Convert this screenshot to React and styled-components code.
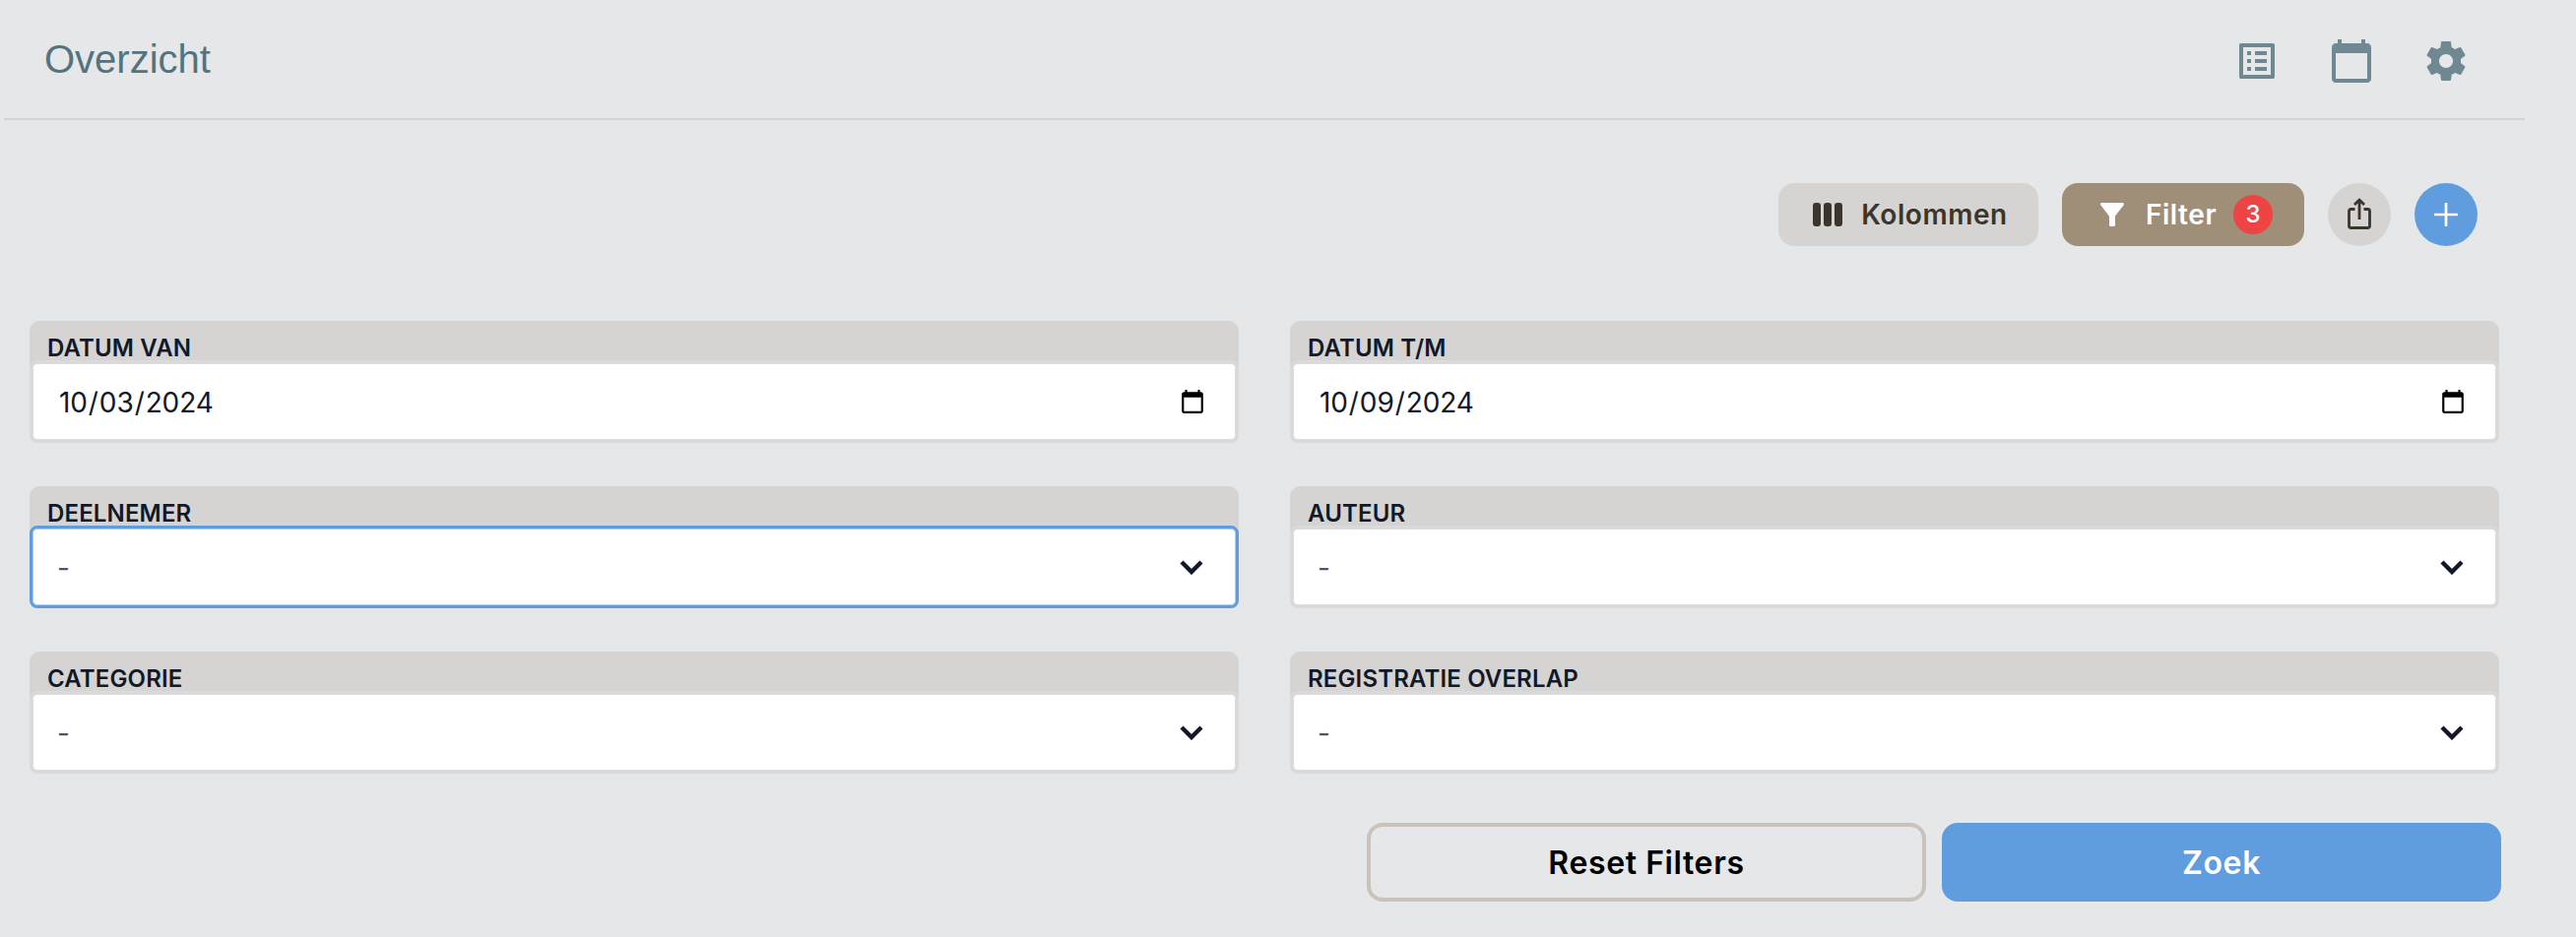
import React from "react";
import styled, { createGlobalStyle } from "styled-components";

const Global = createGlobalStyle`
  html, body { margin: 0; padding: 0; background: #e6e7e9; height: 100%; overflow: hidden; }
  body { font-family: Inter, "Liberation Sans", sans-serif; }
  * { box-sizing: border-box; }
`;

const Page = styled.div`
  width: 2616px;
  height: 952px;
  background: #e6e7e9;
`;

const Header = styled.header`
  margin-left: 4px;
  width: 2560px;
  height: 122px;
  border-bottom: 2px solid #d2d3d5;
  display: flex;
  align-items: center;
  justify-content: space-between;
  padding: 4px 56px 0 41px;
`;

const Title = styled.h1`
  margin: -4px 0 0;
  font: 400 40px/48px "Liberation Sans", Arial, sans-serif;
  color: #53737f;
`;

const HeaderIcons = styled.nav`
  display: flex;
  gap: 48px;
  color: #708892;
`;

const HeaderIcon = styled.svg`
  width: 48px;
  height: 48px;
  display: block;
  fill: currentColor;
`;

const Actions = styled.div`
  margin-top: 64px;
  padding-right: 100px;
  display: flex;
  justify-content: flex-end;
  gap: 24px;
`;

const ActionButton = styled.button`
  height: 64px;
  width: ${(p) => p.$width}px;
  border: 0;
  border-radius: 16px;
  padding: 0 0 0 ${(p) => p.$shift}px;
  display: flex;
  align-items: center;
  justify-content: center;
  gap: ${(p) => p.$gap}px;
  background: ${(p) => p.$bg};
  color: ${(p) => p.$color};
  font: 600 28px/40px Inter, sans-serif;
  letter-spacing: 0.55px;
`;

const Badge = styled.span`
  width: 40px;
  height: 40px;
  margin-left: -5px;
  border-radius: 50%;
  background: #ef4444;
  color: #fff;
  font: 500 24px/40px Inter, sans-serif;
  letter-spacing: 0;
  text-align: center;
`;

const RoundButton = styled.button`
  width: 64px;
  height: 64px;
  border: 0;
  padding: 0;
  border-radius: 50%;
  display: flex;
  align-items: center;
  justify-content: center;
  background: ${(p) => p.$bg};
  color: ${(p) => p.$color};
`;

const FormArea = styled.form`
  margin: 76px 0 0 30px;
  width: 2510px;
`;

const Grid = styled.div`
  width: 2508px;
  display: grid;
  grid-template-columns: 1228px 1228px;
  column-gap: 52px;
  row-gap: 44px;
`;

const Field = styled.label`
  display: block;
  height: 124px;
  border-radius: 10px;
  background: #d5d4d2;
`;

const FieldLabel = styled.span`
  display: block;
  height: 40px;
  padding: 12px 0 0 18px;
  font: 600 24px/32px Inter, sans-serif;
  letter-spacing: 0.15px;
  color: #111827;
  white-space: nowrap;
`;

const DateInput = styled.input`
  display: block;
  width: 100%;
  height: 84px;
  border: 4px solid #dadadc;
  border-radius: 8px;
  background: #fff;
  padding: 2px 27px 0 25px;
  font: 400 28px/40px Inter, sans-serif;
  letter-spacing: -0.1px;
  color: #111827;
  outline: none;
`;

const SelectWrap = styled.span`
  display: block;
  position: relative;
`;

const Select = styled.select`
  display: block;
  width: 100%;
  height: 84px;
  appearance: none;
  border: ${(p) => (p.$focus ? "3px solid #5f9ddf" : "4px solid #dadadc")};
  box-shadow: ${(p) => (p.$focus ? "inset 0 0 0 1px #aecdee" : "none")};
  border-radius: 8px;
  background: #fff;
  padding: 2px 80px 0 ${(p) => (p.$focus ? 25 : 24)}px;
  font: 400 28px/40px Inter, sans-serif;
  color: #4b5563;
  outline: none;
`;

const Chevron = styled.svg`
  position: absolute;
  right: 36px;
  top: 34px;
  width: 24px;
  height: 16px;
  pointer-events: none;
`;

const Buttons = styled.div`
  margin-top: 50px;
  display: flex;
  justify-content: flex-end;
  gap: 16px;
`;

const BigButton = styled.button`
  width: 568px;
  height: 80px;
  border-radius: 16px;
  border: ${(p) => (p.$primary ? "0" : "4px solid #c9c3bb")};
  background: ${(p) => (p.$primary ? "#5f9ddf" : "transparent")};
  color: ${(p) => (p.$primary ? "#fff" : "#000")};
  font: 600 32px/48px Inter, sans-serif;
  letter-spacing: 0.6px;
  padding: 2px 0 0;
`;

const ChevronIcon = () => (
  <Chevron viewBox="0 0 24 16" fill="none" stroke="#111827" strokeWidth="4.4">
    <path d="M2 3l10 10L22 3" />
  </Chevron>
);

const DateField = ({ label, value }) => (
  <Field>
    <FieldLabel>{label}</FieldLabel>
    <DateInput type="date" defaultValue={value} />
  </Field>
);

const SelectField = ({ label, focus }) => (
  <Field>
    <FieldLabel>{label}</FieldLabel>
    <SelectWrap>
      <Select $focus={focus} defaultValue="-">
        <option value="-">-</option>
      </Select>
      <ChevronIcon />
    </SelectWrap>
  </Field>
);

export default function App() {
  return (
    <Page>
      <Global />
      <Header>
        <Title>Overzicht</Title>
        <HeaderIcons>
          <HeaderIcon viewBox="0 0 24 24">
            <path d="M19 5v14H5V5h14m1.1-2H3.9c-.5 0-.9.4-.9.9v16.2c0 .4.4.9.9.9h16.2c.4 0 .9-.5.9-.9V3.9c0-.5-.5-.9-.9-.9zM11 7h6v2h-6V7zm0 4h6v2h-6v-2zm0 4h6v2h-6zM7 7h2v2H7zm0 4h2v2H7zm0 4h2v2H7z" />
          </HeaderIcon>
          <HeaderIcon viewBox="0 0 24 24">
            <path d="M20 3h-1V1h-2v2H7V1H5v2H4c-1.1 0-2 .9-2 2v16c0 1.1.9 2 2 2h16c1.1 0 2-.9 2-2V5c0-1.1-.9-2-2-2zm0 18H4V8h16v13z" />
          </HeaderIcon>
          <HeaderIcon viewBox="0 0 24 24">
            <path d="M19.43 12.98c.04-.32.07-.64.07-.98s-.03-.66-.07-.98l2.11-1.65c.19-.15.24-.42.12-.64l-2-3.46c-.12-.22-.39-.3-.61-.22l-2.49 1c-.52-.4-1.08-.73-1.69-.98l-.38-2.65C14.46 2.18 14.25 2 14 2h-4c-.25 0-.46.18-.49.42l-.38 2.65c-.61.25-1.17.59-1.69.98l-2.49-1c-.23-.09-.49 0-.61.22l-2 3.46c-.13.22-.07.49.12.64l2.11 1.65c-.04.32-.07.65-.07.98s.03.66.07.98l-2.11 1.65c-.19.15-.24.42-.12.64l2 3.46c.12.22.39.3.61.22l2.49-1c.52.4 1.08.73 1.69.98l.38 2.65c.03.24.24.42.49.42h4c.25 0 .46-.18.49-.42l.38-2.65c.61-.25 1.17-.59 1.69-.98l2.49 1c.23.09.49 0 .61-.22l2-3.46c.12-.22.07-.49-.12-.64l-2.11-1.65zM12 15.5c-1.93 0-3.5-1.57-3.5-3.5s1.57-3.5 3.5-3.5 3.5 1.57 3.5 3.5-1.57 3.5-3.5 3.5z" />
          </HeaderIcon>
        </HeaderIcons>
      </Header>

      <Actions>
        <ActionButton type="button" $width={264} $shift={4} $gap={19} $bg="#d5d4d2" $color="#3c352d">
          <svg width="30" height="24" viewBox="0 0 30 24" fill="currentColor">
            <rect x="0" y="0" width="8" height="24" rx="3" />
            <rect x="11" y="0" width="8" height="24" rx="3" />
            <rect x="22" y="0" width="8" height="24" rx="3" />
          </svg>
          Kolommen
        </ActionButton>
        <ActionButton type="button" $width={246} $shift={7} $gap={22} $bg="#9f8e78" $color="#fff">
          <svg width="24" height="24" viewBox="4 4 16 16" fill="currentColor">
            <path d="M4.25 5.61C6.27 8.2 10 13 10 13v6c0 .55.45 1 1 1h2c.55 0 1-.45 1-1v-6s3.72-4.8 5.74-7.39c.51-.66.04-1.61-.79-1.61H5.04c-.83 0-1.3.95-.79 1.61z" />
          </svg>
          Filter
          <Badge>3</Badge>
        </ActionButton>
        <RoundButton type="button" $bg="#d5d4d2" $color="#3c352d">
          <svg width="26" height="34" viewBox="0 0 26 34" fill="none" stroke="currentColor" strokeWidth="2.8" strokeLinejoin="round">
            <path d="M8.5 11.5h-4a2 2 0 0 0-2 2v15a2 2 0 0 0 2 2h17a2 2 0 0 0 2-2v-15a2 2 0 0 0-2-2h-4" />
            <path d="M13 22V2M8 7l5-5 5 5" />
          </svg>
        </RoundButton>
        <RoundButton type="button" $bg="#5f9ddf" $color="#fff">
          <svg width="24" height="24" viewBox="0 0 24 24" fill="none" stroke="currentColor" strokeWidth="2.7" strokeLinecap="round">
            <path d="M12 1v22M1 12h22" />
          </svg>
        </RoundButton>
      </Actions>

      <FormArea>
        <Grid>
          <DateField label="DATUM VAN" value="2024-10-03" />
          <DateField label="DATUM T/M" value="2024-10-09" />
          <SelectField label="DEELNEMER" focus />
          <SelectField label="AUTEUR" />
          <SelectField label="CATEGORIE" />
          <SelectField label="REGISTRATIE OVERLAP" />
        </Grid>
        <Buttons>
          <BigButton type="button">Reset Filters</BigButton>
          <BigButton type="button" $primary>Zoek</BigButton>
        </Buttons>
      </FormArea>
    </Page>
  );
}
